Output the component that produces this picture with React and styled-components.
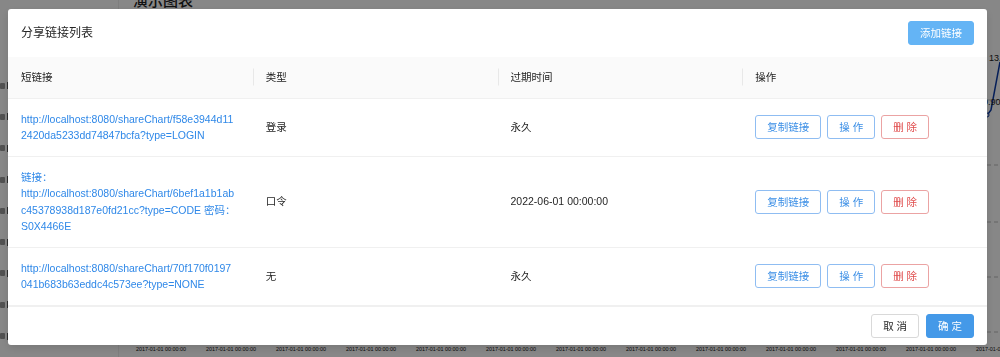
import React from 'react'
import styled, { createGlobalStyle } from 'styled-components'

const GlobalStyle = createGlobalStyle`
  html, body {
    margin: 0;
    padding: 0;
    width: 1000px;
    height: 357px;
    overflow: hidden;
  }
  body {
    font-family: "Liberation Sans", "Noto Sans CJK SC", sans-serif;
    color: #262626;
  }
`

// ---- page behind the dialog ----
const Page = styled.div`
  width: 1000px;
  height: 357px;
  background: #fff;
  display: flex;
  overflow: hidden;
`
const Sidebar = styled.div`
  width: 118px;
  flex-shrink: 0;
  display: flex;
  flex-direction: column;
  padding-top: 70px;
  border-right: 1px solid #eee;
`
const SideItem = styled.div`
  height: 31.3px;
  display: flex;
  align-items: center;
  gap: 2px;
`
const Check = styled.span`
  width: 5px;
  height: 6px;
  background: #9a9a9a;
  border-radius: 1px;
`
const Tick = styled.span`
  width: 2px;
  height: 7px;
  background: #555;
`
const Main = styled.div`
  flex: 1;
  display: flex;
  flex-direction: column;
`
const Heading = styled.h1`
  margin: -9px 0 0 14px;
  font-size: 15px;
  line-height: 19px;
  font-weight: 500;
  color: #222;
`
const Chart = styled.svg`
  flex: 1;
  width: 100%;
  display: block;
`

// ---- dialog ----
const Overlay = styled.div`
  position: fixed;
  inset: 0;
  background: rgba(0, 0, 0, 0.47);
  display: flex;
  padding: 9px 13px 12px 8px;
  box-sizing: border-box;
`
const Modal = styled.div`
  flex: 1;
  background: #fff;
  border-radius: 3px;
  box-shadow: 0 3px 9px rgba(0, 0, 0, 0.12);
  display: flex;
  flex-direction: column;
  overflow: hidden;
`
const Header = styled.div`
  display: flex;
  align-items: center;
  justify-content: space-between;
  padding: 12px 13px;
`
const Title = styled.div`
  font-size: 12px;
  line-height: 24px;
  color: #262626;
`
const Button = styled.button`
  height: 24px;
  padding: 0 11px;
  box-sizing: border-box;
  font-family: inherit;
  font-size: 10.5px;
  line-height: 22px;
  border-radius: 3px;
  cursor: pointer;
  white-space: nowrap;
  border: 1px solid ${p => p.$border || '#d9d9d9'};
  background: ${p => p.$bg || '#fff'};
  color: ${p => p.$color || '#262626'};
`
const Table = styled.div`
  display: flex;
  flex-direction: column;
`
const Row = styled.div`
  display: grid;
  grid-template-columns: repeat(4, 1fr);
  align-items: center;
  border-bottom: 1px solid #f0f0f0;
  background: ${p => (p.$head ? '#fafafa' : '#fff')};
`
const Cell = styled.div`
  position: relative;
  padding: 12px 13px;
  font-size: 10.5px;
  line-height: 16.5px;
  color: #262626;
  word-break: break-all;
  min-width: 0;
`
const HeadCell = styled(Cell)`
  color: #222;
  & + &::before {
    content: '';
    position: absolute;
    left: 0;
    top: 50%;
    width: 1px;
    height: 17px;
    transform: translateY(-50%);
    background: #e8e8e8;
  }
`
const LinkText = styled.a`
  color: #2f88e8;
  text-decoration: none;
  display: block;
`
const LinkLine = styled.span`
  display: block;
  white-space: nowrap;
`
const Actions = styled.div`
  display: flex;
  gap: 6px;
`
const Footer = styled.div`
  display: flex;
  justify-content: flex-end;
  gap: 7px;
  padding: 7.5px 13px;
  border-top: 1px solid #f0f0f0;
`

const rows = [
  {
    lines: ['http://localhost:8080/shareChart/f58e3944d11', '2420da5233dd74847bcfa?type=LOGIN'],
    type: '登录',
    expire: '永久',
  },
  {
    lines: [
      '链接：',
      'http://localhost:8080/shareChart/6bef1a1b1ab',
      'c45378938d187e0fd21cc?type=CODE 密码：',
      'S0X4466E',
    ],
    type: '口令',
    expire: '2022-06-01 00:00:00',
  },
  {
    lines: ['http://localhost:8080/shareChart/70f170f0197', '041b683b63eddc4c573ee?type=NONE'],
    type: '无',
    expire: '永久',
  },
]

const blue = { $border: '#8fbdf2', $color: '#3a8ee6' }
const red = { $border: '#eba3a3', $color: '#e04b4b' }

function Backdrop() {
  const grid = [90, 155, 212, 267, 322]
  const labels = Array.from({ length: 13 }, (_, i) => 17 + i * 70)
  return (
    <Page>
      <Sidebar>
        {Array.from({ length: 9 }).map((_, i) => (
          <SideItem key={i}>
            <Check />
            <Tick />
          </SideItem>
        ))}
      </Sidebar>
      <Main>
        <Heading>演示图表</Heading>
        <Chart viewBox="0 0 881 347" preserveAspectRatio="none">
          {grid.map(y => (
            <line key={y} x1="0" x2="881" y1={y} y2={y} stroke="#bbb" strokeDasharray="4 3" strokeWidth="1" />
          ))}
          <polyline points="840,140 866,108 872,100 881,52" fill="none" stroke="#0a3aa8" strokeWidth="1.5" />
          <circle cx="868" cy="105" r="2" fill="#fff" stroke="#0a3aa8" />
          <text x="870" y="51" fontSize="9" fill="#222" fontFamily="Liberation Sans">13.5</text>
          <text x="864" y="95" fontSize="9" fill="#222" fontFamily="Liberation Sans">9.90</text>
          {labels.map(x => (
            <text key={x} x={x} y="341" fontSize="5.4" fill="#111" fontFamily="Liberation Sans">
              2017-01-01 00:00:00
            </text>
          ))}
        </Chart>
      </Main>
    </Page>
  )
}

export default function App() {
  return (
    <>
      <GlobalStyle />
      <Backdrop />
      <Overlay>
        <Modal>
          <Header>
            <Title>分享链接列表</Title>
            <Button $bg="#64b4f5" $border="#64b4f5" $color="#fff">添加链接</Button>
          </Header>
          <Table>
            <Row $head>
              <HeadCell>短链接</HeadCell>
              <HeadCell>类型</HeadCell>
              <HeadCell>过期时间</HeadCell>
              <HeadCell>操作</HeadCell>
            </Row>
            {rows.map((r, i) => (
              <Row key={i}>
                <Cell>
                  <LinkText href="#">
                    {r.lines.map(l => (
                      <LinkLine key={l}>{l}</LinkLine>
                    ))}
                  </LinkText>
                </Cell>
                <Cell>{r.type}</Cell>
                <Cell>{r.expire}</Cell>
                <Cell>
                  <Actions>
                    <Button {...blue}>复制链接</Button>
                    <Button {...blue}>操 作</Button>
                    <Button {...red}>删 除</Button>
                  </Actions>
                </Cell>
              </Row>
            ))}
          </Table>
          <Footer>
            <Button>取 消</Button>
            <Button $bg="#4499e8" $border="#4499e8" $color="#fff">确 定</Button>
          </Footer>
        </Modal>
      </Overlay>
    </>
  )
}
